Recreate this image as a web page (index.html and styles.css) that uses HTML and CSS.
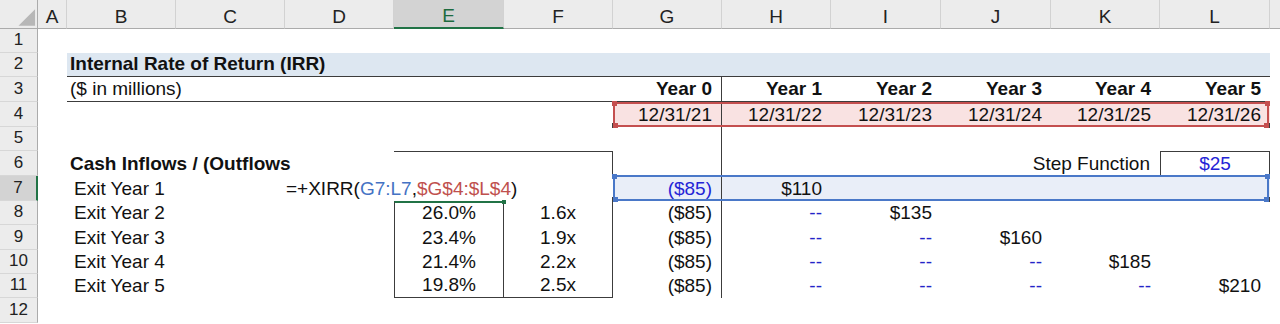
FILE: index.html
```html
<!DOCTYPE html>
<html>
<head>
<meta charset="utf-8">
<link rel="stylesheet" href="styles.css">
</head>
<body>
<div class="sheet">
  <!-- header row -->
  <div class="ch corner"><svg width="38" height="29" viewBox="0 0 38 29"><polygon points="36,9 36,26 19,26" fill="#b7b7b7"/></svg></div>
  <div class="ch">A</div>
  <div class="ch">B</div>
  <div class="ch">C</div>
  <div class="ch">D</div>
  <div class="ch sel-col">E</div>
  <div class="ch">F</div>
  <div class="ch">G</div>
  <div class="ch">H</div>
  <div class="ch">I</div>
  <div class="ch">J</div>
  <div class="ch">K</div>
  <div class="ch">L</div>
  <div class="ch last"></div>

  <!-- row 1 -->
  <div class="rh">1</div>
  <div class="c s13"></div>

  <!-- row 2 -->
  <div class="rh">2</div>
  <div class="c"></div>
  <div class="c s11 title">Internal Rate of Return (IRR)</div>
  <div class="c"></div>

  <!-- row 3 -->
  <div class="rh">3</div>
  <div class="c"></div>
  <div class="c s5 bb">($ in millions)</div>
  <div class="c r bold bb vr">Year 0</div>
  <div class="c r bold bb">Year 1</div>
  <div class="c r bold bb">Year 2</div>
  <div class="c r bold bb">Year 3</div>
  <div class="c r bold bb">Year 4</div>
  <div class="c r bold bb">Year 5</div>
  <div class="c"></div>

  <!-- row 4 -->
  <div class="rh">4</div>
  <div class="c"></div>
  <div class="c s5"></div>
  <div class="band pink s6">
    <div class="c r vr">12/31/21</div>
    <div class="c r">12/31/22</div>
    <div class="c r">12/31/23</div>
    <div class="c r">12/31/24</div>
    <div class="c r">12/31/25</div>
    <div class="c r">12/31/26</div>
    <div class="range red"><i class="k tl"></i><i class="k tr"></i><i class="k bl"></i><i class="k br"></i></div>
  </div>
  <div class="c"></div>

  <!-- row 5 -->
  <div class="rh">5</div>
  <div class="c"></div>
  <div class="c s5"></div>
  <div class="c vr"></div>
  <div class="c s5"></div>
  <div class="c"></div>

  <!-- row 6 -->
  <div class="rh">6</div>
  <div class="c"></div>
  <div class="c s2 bold">Cash Inflows / (Outflows</div>
  <div class="c"></div>
  <div class="c bt"></div>
  <div class="c bt br"></div>
  <div class="c vr"></div>
  <div class="c s3"></div>
  <div class="c r step">Step Function</div>
  <div class="c ctr blue box">$25</div>
  <div class="c"></div>

  <!-- row 7 -->
  <div class="rh sel-row">7</div>
  <div class="c"></div>
  <div class="c ind">Exit Year 1</div>
  <div class="c"></div>
  <div class="c s3 formula">=+XIRR(<span class="fb">G7:L7</span>,<span class="fr">$G$4:$L$4</span>)</div>
  <div class="band lblue s6">
    <div class="c r vr blue">($85)</div>
    <div class="c r">$110</div>
    <div class="c r"></div>
    <div class="c r"></div>
    <div class="c r"></div>
    <div class="c r"></div>
    <div class="range bluer"><i class="k tl"></i><i class="k tr"></i><i class="k bl"></i><i class="k br"></i></div>
  </div>
  <div class="c"></div>

  <!-- row 8 -->
  <div class="rh">8</div>
  <div class="c"></div>
  <div class="c ind">Exit Year 2</div>
  <div class="c"></div>
  <div class="c"></div>
  <div class="c ctr bl br bg e8">26.0%</div>
  <div class="c ctr br">1.6x</div>
  <div class="c r vr">($85)</div>
  <div class="c r dash">--</div>
  <div class="c r">$135</div>
  <div class="c"></div>
  <div class="c"></div>
  <div class="c"></div>
  <div class="c"></div>

  <!-- row 9 -->
  <div class="rh">9</div>
  <div class="c"></div>
  <div class="c ind">Exit Year 3</div>
  <div class="c"></div>
  <div class="c"></div>
  <div class="c ctr bl br">23.4%</div>
  <div class="c ctr br">1.9x</div>
  <div class="c r vr">($85)</div>
  <div class="c r dash">--</div>
  <div class="c r dash">--</div>
  <div class="c r">$160</div>
  <div class="c"></div>
  <div class="c"></div>
  <div class="c"></div>

  <!-- row 10 -->
  <div class="rh">10</div>
  <div class="c"></div>
  <div class="c ind">Exit Year 4</div>
  <div class="c"></div>
  <div class="c"></div>
  <div class="c ctr bl br">21.4%</div>
  <div class="c ctr br">2.2x</div>
  <div class="c r vr">($85)</div>
  <div class="c r dash">--</div>
  <div class="c r dash">--</div>
  <div class="c r dash">--</div>
  <div class="c r">$185</div>
  <div class="c"></div>
  <div class="c"></div>

  <!-- row 11 -->
  <div class="rh">11</div>
  <div class="c"></div>
  <div class="c ind">Exit Year 5</div>
  <div class="c"></div>
  <div class="c"></div>
  <div class="c ctr bl br bb">19.8%</div>
  <div class="c ctr br bb">2.5x</div>
  <div class="c r vr">($85)</div>
  <div class="c r dash">--</div>
  <div class="c r dash">--</div>
  <div class="c r dash">--</div>
  <div class="c r dash">--</div>
  <div class="c r">$210</div>
  <div class="c"></div>

  <!-- row 12 -->
  <div class="rh">12</div>
  <div class="c s13"></div>
</div>
</body>
</html>
```

FILE: styles.css
```css
html, body {
  margin: 0;
  padding: 0;
  background: #ffffff;
  overflow: hidden;
}

body {
  font-family: "Liberation Sans", Arial, sans-serif;
  color: #111111;
}

.sheet {
  display: grid;
  width: 1280px;
  height: 324px;
  grid-template-columns: 38px 29px 109px 109px 109px 110px 109px 109px 109px 110px 110px 109px 110px 1fr;
  grid-template-rows: 29px 24px 24px 25px 25px 24px 25px 25px 24px 25px 24px 24px 25px;
}

/* column headers */
.ch {
  box-sizing: border-box;
  display: flex;
  align-items: flex-end;
  justify-content: center;
  background: #ececec;
  border-right: 1px solid #d2d2d2;
  border-bottom: 1px solid #ababab;
  font-size: 19px;
  line-height: 22px;
  padding-bottom: 0;
  color: #222222;
}

.ch.corner {
  padding: 0;
  align-items: stretch;
  justify-content: stretch;
  border-right: 1px solid #ababab;
}

.ch.sel-col {
  background: #d3d3d3;
  color: #1d6b3f;
  border-bottom: 2px solid #217346;
}

.ch.last {
  border-right: none;
}

/* row headers */
.rh {
  box-sizing: border-box;
  display: flex;
  align-items: flex-end;
  justify-content: center;
  background: #ececec;
  border-right: 1px solid #ababab;
  border-bottom: 1px solid #d7d7d7;
  font-size: 17px;
  line-height: 19px;
  padding-bottom: 3px;
  color: #222222;
}

.rh.sel-row {
  background: #d3d3d3;
  border-right: 2px solid #217346;
}

/* cells */
.c {
  box-sizing: border-box;
  display: flex;
  align-items: flex-end;
  min-width: 0;
  padding: 0 3px 2px 3px;
  font-size: 19px;
  line-height: 21px;
  white-space: nowrap;
}

.s2 { grid-column: span 2; }
.s3 { grid-column: span 3; }
.s5 { grid-column: span 5; }
.s6 { grid-column: span 6; }
.s11 { grid-column: span 11; }
.s13 { grid-column: span 13; }

.r {
  justify-content: flex-end;
  padding-right: 9px;
}

.ctr {
  justify-content: center;
}

.bold {
  font-weight: bold;
}

.ind {
  padding-left: 7px;
}

.title {
  background: #dde7f1;
  font-weight: bold;
  border-bottom: 1px solid #3c3c3c;
}

.bb { border-bottom: 1px solid #3c3c3c; }
.bt { border-top: 1px solid #3c3c3c; }
.br { border-right: 1px solid #3c3c3c; }
.bl { border-left: 1px solid #3c3c3c; }
.vr { border-right: 1px solid #3c3c3c; }

.bg {
  border-top: 2px solid #217346;
}

.e8 {
  position: relative;
}

.e8::after {
  content: "";
  position: absolute;
  top: -3px;
  right: -3px;
  width: 4px;
  height: 4px;
  background: #217346;
}

.step {
  padding-right: 10px;
}

.blue {
  color: #2424d6;
}

.dash {
  color: #2424c8;
}

.box {
  border: 1px solid #3c3c3c;
  border-bottom: none;
}

.formula {
  padding-left: 1px;
  position: relative;
  z-index: 2;
}

.fb { color: #4472c4; }
.fr { color: #c0504d; }

/* highlighted range bands */
.band {
  position: relative;
  display: grid;
  grid-template-columns: 109px 109px 110px 110px 109px 110px;
}

.pink {
  background: #f9e2e2;
}

.lblue {
  background: #e9eef8;
}

.range {
  position: absolute;
  top: 0;
  left: 0;
  right: 1px;
  bottom: 0;
  box-sizing: border-box;
  pointer-events: none;
}

.range.red {
  border: 2px solid #c44f4f;
}

.range.bluer {
  top: -1px;
  border: 2px solid #4a78c8;
}

.k {
  position: absolute;
  width: 5px;
  height: 5px;
}

.range.red .k { background: #c44f4f; }
.range.bluer .k { background: #4a78c8; }

.k.tl { top: -3px; left: -3px; }
.k.tr { top: -3px; right: -3px; }
.k.bl { bottom: -3px; left: -3px; }
.k.br { bottom: -3px; right: -3px; }
```
